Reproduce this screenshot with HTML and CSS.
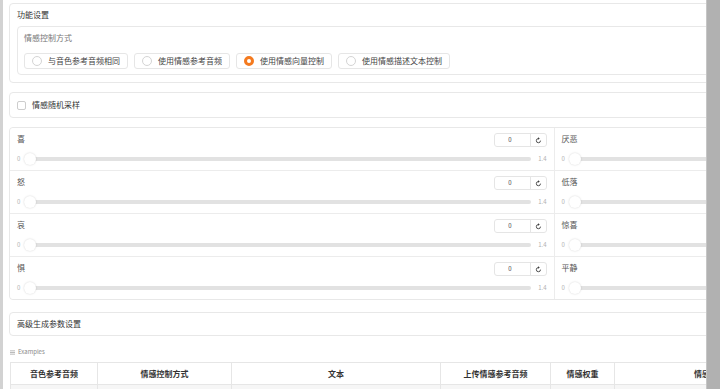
FILE: index.html
```html
<!DOCTYPE html>
<html lang="zh">
<head>
    <meta charset="UTF-8">
    <title>IndexTTS 情感控制</title>
    <link rel="stylesheet" href="styles.css">
</head>
<body>
<div class="page">
    <div class="content">
        <div class="inner">
            <!-- 功能设置 -->
            <section class="panel settings">
                <div class="panel-title">功能设置</div>
                <div class="field">
                    <div class="field-label">情感控制方式</div>
                    <div class="radio-group">
                        <label class="radio-option"><span class="radio"></span>与音色参考音频相同</label>
                        <label class="radio-option"><span class="radio"></span>使用情感参考音频</label>
                        <label class="radio-option"><span class="radio checked"></span>使用情感向量控制</label>
                        <label class="radio-option"><span class="radio"></span>使用情感描述文本控制</label>
                    </div>
                </div>
            </section>

            <!-- 随机采样 -->
            <section class="panel check-panel">
                <label class="check-option"><span class="checkbox"></span>情感随机采样</label>
            </section>

            <!-- 情感向量 -->
            <section class="panel sliders">
                <div class="slider-cell">
                    <div class="slider-head">
                        <span class="slider-label">喜</span>
                        <div class="num-box"><span class="num">0</span><span class="reset"><svg viewBox="0 0 10 10" width="7" height="7"><path d="M7.9 5.2A3 3 0 1 1 5 2.2" fill="none" stroke="#333" stroke-width="1.2"/><path d="M4.4 0.5L6.8 2.2L4.4 3.9Z" fill="#333"/></svg></span></div>
                    </div>
                    <div class="slider-row"><span class="tick">0</span><div class="track"><span class="thumb"></span></div><span class="tick">1.4</span></div>
                </div>
                <div class="slider-cell">
                    <div class="slider-head">
                        <span class="slider-label">厌恶</span>
                    </div>
                    <div class="slider-row"><span class="tick">0</span><div class="track"><span class="thumb"></span></div></div>
                </div>
                <div class="slider-cell">
                    <div class="slider-head">
                        <span class="slider-label">怒</span>
                        <div class="num-box"><span class="num">0</span><span class="reset"><svg viewBox="0 0 10 10" width="7" height="7"><path d="M7.9 5.2A3 3 0 1 1 5 2.2" fill="none" stroke="#333" stroke-width="1.2"/><path d="M4.4 0.5L6.8 2.2L4.4 3.9Z" fill="#333"/></svg></span></div>
                    </div>
                    <div class="slider-row"><span class="tick">0</span><div class="track"><span class="thumb"></span></div><span class="tick">1.4</span></div>
                </div>
                <div class="slider-cell">
                    <div class="slider-head">
                        <span class="slider-label">低落</span>
                    </div>
                    <div class="slider-row"><span class="tick">0</span><div class="track"><span class="thumb"></span></div></div>
                </div>
                <div class="slider-cell">
                    <div class="slider-head">
                        <span class="slider-label">哀</span>
                        <div class="num-box"><span class="num">0</span><span class="reset"><svg viewBox="0 0 10 10" width="7" height="7"><path d="M7.9 5.2A3 3 0 1 1 5 2.2" fill="none" stroke="#333" stroke-width="1.2"/><path d="M4.4 0.5L6.8 2.2L4.4 3.9Z" fill="#333"/></svg></span></div>
                    </div>
                    <div class="slider-row"><span class="tick">0</span><div class="track"><span class="thumb"></span></div><span class="tick">1.4</span></div>
                </div>
                <div class="slider-cell">
                    <div class="slider-head">
                        <span class="slider-label">惊喜</span>
                    </div>
                    <div class="slider-row"><span class="tick">0</span><div class="track"><span class="thumb"></span></div></div>
                </div>
                <div class="slider-cell">
                    <div class="slider-head">
                        <span class="slider-label">惧</span>
                        <div class="num-box"><span class="num">0</span><span class="reset"><svg viewBox="0 0 10 10" width="7" height="7"><path d="M7.9 5.2A3 3 0 1 1 5 2.2" fill="none" stroke="#333" stroke-width="1.2"/><path d="M4.4 0.5L6.8 2.2L4.4 3.9Z" fill="#333"/></svg></span></div>
                    </div>
                    <div class="slider-row"><span class="tick">0</span><div class="track"><span class="thumb"></span></div><span class="tick">1.4</span></div>
                </div>
                <div class="slider-cell">
                    <div class="slider-head">
                        <span class="slider-label">平静</span>
                    </div>
                    <div class="slider-row"><span class="tick">0</span><div class="track"><span class="thumb"></span></div></div>
                </div>
            </section>

            <!-- 高级参数 -->
            <section class="panel accordion">高级生成参数设置</section>

            <!-- Examples -->
            <div class="examples-label">
                <svg viewBox="0 0 6 6" width="5" height="5"><path d="M0 1h6M0 3h6M0 5h6" stroke="#999" stroke-width="0.8"/></svg>
                Examples
            </div>
            <table class="examples">
                <colgroup>
                    <col class="c1">
                    <col class="c2">
                    <col class="c3">
                    <col class="c4">
                    <col class="c5">
                    <col class="c6">
                </colgroup>
                <thead>
                    <tr>
                        <th>音色参考音频</th>
                        <th>情感控制方式</th>
                        <th>文本</th>
                        <th>上传情感参考音频</th>
                        <th>情感权重</th>
                        <th>情感</th>
                    </tr>
                </thead>
                <tbody>
                    <tr>
                        <td></td>
                        <td></td>
                        <td></td>
                        <td></td>
                        <td></td>
                        <td></td>
                    </tr>
                </tbody>
            </table>
        </div>
    </div>
    <div class="scrollbar"></div>
</div>
</body>
</html>
```

FILE: styles.css
```css
/* Page frame */
body {
    margin: 0;
    font-family: "Noto Sans CJK SC", "Noto Sans", sans-serif;
    font-size: 8px;
    color: #333;
    background: #fff;
}
.page {
    display: flex;
    height: 389px;
    overflow: hidden;
}
.content {
    flex: 1;
    overflow: hidden;
    border-left: 3px solid #d2d2d2;
}
.inner {
    width: 1090px;
    padding: 3px 0 0 6px;
}
.scrollbar {
    width: 13px;
    flex: none;
    background: #b1b1b1;
    border-left: 1px solid #c6c6c6;
}

/* Panels */
.panel {
    border: 1px solid #e8e8e8;
    border-radius: 4px;
    background: #fff;
    margin-bottom: 9px;
}
.settings {
    padding: 6px 7px 7px 7px;
}
.panel-title {
    line-height: 10px;
    color: #333;
    margin-bottom: 6px;
}
.field {
    border: 1px solid #e8e8e8;
    border-radius: 4px;
    padding: 6px 6px 5px 6px;
}
.field-label {
    line-height: 10px;
    color: #777;
    margin-bottom: 10px;
}
.radio-group {
    display: flex;
    gap: 6px;
}
.radio-option {
    display: flex;
    align-items: center;
    gap: 6px;
    height: 14px;
    padding: 0 7px 0 7px;
    border: 1px solid #e6e6e6;
    border-radius: 3px;
    color: #444;
    line-height: 10px;
}
.radio {
    width: 8px;
    height: 8px;
    border: 1px solid #d4d4d4;
    border-radius: 50%;
    background: #fff;
}
.radio.checked {
    width: 4px;
    height: 4px;
    border: 3px solid #f47a1f;
    background: #fff;
}

.check-panel {
    padding: 7px 7px;
}
.check-option {
    display: flex;
    align-items: center;
    gap: 6px;
    line-height: 10px;
    color: #333;
}
.checkbox {
    width: 7px;
    height: 7px;
    border: 1px solid #cdcdcd;
    border-radius: 2px;
}

/* Emotion sliders */
.sliders {
    display: grid;
    grid-template-columns: 1fr 1fr;
    gap: 1px;
    background: #ececec;
    overflow: hidden;
}
.slider-cell {
    background: #fff;
    padding: 5px 7px 5px 7px;
}
.slider-head {
    display: flex;
    justify-content: space-between;
    height: 14px;
}
.slider-label {
    line-height: 11px;
    color: #555;
}
.num-box {
    display: flex;
    width: 51px;
    height: 12px;
    border: 1px solid #e5e5e5;
    border-radius: 3px;
}
.num {
    flex: 1;
    padding-right: 4px;
    text-align: center;
    font-size: 6px;
    line-height: 12px;
    color: #444;
    border-right: 1px solid #e5e5e5;
}
.reset {
    width: 15px;
    display: flex;
    align-items: center;
    justify-content: center;
}
.slider-row {
    display: flex;
    align-items: center;
    height: 12px;
    margin-top: 6px;
    gap: 4px;
}
.tick {
    font-size: 6px;
    color: #b0b0b0;
    line-height: 8px;
}
.slider-row .tick:last-child {
    margin-left: 3px;
}
.track {
    position: relative;
    flex: 1;
    height: 4px;
    border-radius: 2px;
    background: #e2e2e2;
}
.thumb {
    position: absolute;
    left: 0;
    top: -4px;
    width: 12px;
    height: 12px;
    border-radius: 50%;
    background: #fff;
    box-shadow: 0 0 2px rgba(0, 0, 0, 0.18);
}

.accordion {
    margin-top: 12px;
    padding: 6px 7px;
    line-height: 10px;
    color: #333;
}

/* Examples */
.examples-label {
    display: flex;
    align-items: center;
    gap: 3px;
    margin: 12px 0 6px 1px;
    font-size: 6px;
    line-height: 8px;
    color: #888;
}
.examples {
    margin-left: 1px;
    table-layout: fixed;
    border-collapse: collapse;
    width: 700px;
}
.c1 { width: 87px; }
.c2 { width: 134px; }
.c3 { width: 209px; }
.c4 { width: 110px; }
.c5 { width: 64px; }
.c6 { width: 96px; }
.examples th {
    height: 21px;
    padding: 0;
    border: 1px solid #e6e6e6;
    font-weight: bold;
    color: #333;
    text-align: center;
    background: #fff;
}
.examples th:last-child {
    text-align: right;
    padding-right: 0;
}
.examples td {
    height: 22px;
    padding: 0;
    border: 1px solid #e6e6e6;
    background: #f6f6f6;
}
```
